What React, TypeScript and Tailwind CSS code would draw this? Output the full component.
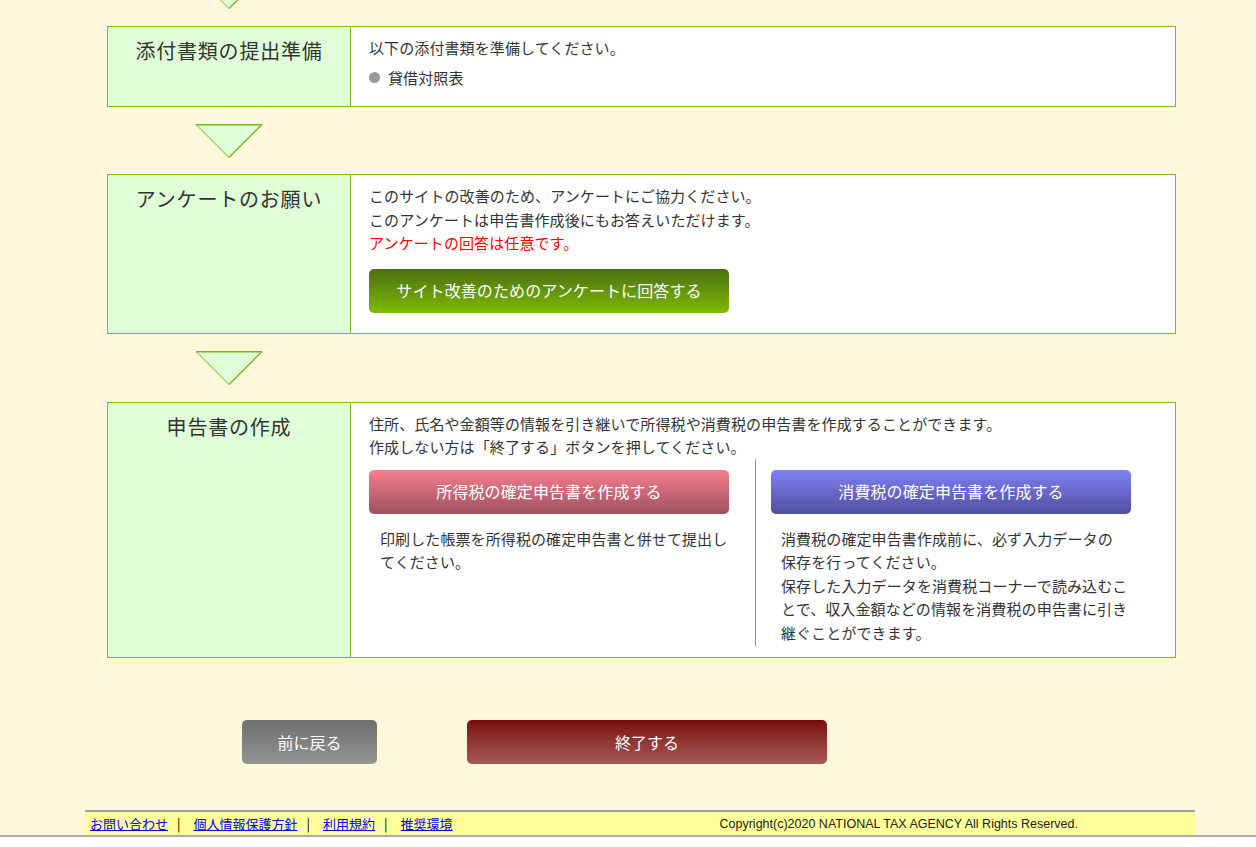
import React from "react";

const font = { fontFamily: '"Noto Sans CJK JP", "Noto Sans", sans-serif' };

function Arrow({ top = false, mb = "mb-[17px]" }: { top?: boolean; mb?: string }) {
  return (
    <div className={top ? "w-[243px] flex justify-center -mt-[25px] mb-[17px]" : `w-[243px] flex justify-center mt-[17px] ${mb}`}>
      <svg width="68" height="34" viewBox="0 0 68 34">
        <polygon points="1,0.5 67,0.5 34,33.5" fill="#dfffd6" stroke="none" />
        <line x1="1" y1="0.5" x2="34" y2="33.5" stroke="#a6d46a" strokeWidth="1.2" />
        <line x1="67" y1="0.5" x2="34" y2="33.5" stroke="#7fb72a" strokeWidth="1.4" />
        <line x1="1" y1="0.75" x2="67" y2="0.75" stroke="#7ab51d" strokeWidth="1.5" />
      </svg>
    </div>
  );
}

function Box({ title, children, pb = "pb-[17px]" }: { title: string; children: React.ReactNode; pb?: string }) {
  return (
    <div className="flex w-[1069px] border border-[#80b818] bg-white">
      <div className="w-[243px] shrink-0 bg-[#e0ffd8] border-r border-[#80b818] pt-[12px] text-center text-[20px] leading-[24px] tracking-[0.8px] text-[#333]">
        {title}
      </div>
      <div className={`flex-1 pl-[18px] pt-[9px] ${pb} text-[15px] leading-[23.5px] tracking-[0.1px] text-[#333]`}>{children}</div>
    </div>
  );
}

export default function App() {
  return (
    <div style={font} className="w-[1256px] bg-[#fff7dc] border-b-2 border-[#aaaaaa]">
      <div className="ml-[107px]">
        <Arrow top />
        <Box title="添付書類の提出準備">
          <p>以下の添付書類を準備してください。</p>
          <div className="mt-[6px] flex items-center">
            <span className="w-[11px] h-[11px] rounded-full bg-[#999] mr-[8px]" />
            <span>貸借対照表</span>
          </div>
        </Box>
        <Arrow mb="mb-[16px]" />
        <Box title="アンケートのお願い" pb="pb-[20px]">
          <p>このサイトの改善のため、アンケートにご協力ください。</p>
          <p>このアンケートは申告書作成後にもお答えいただけます。</p>
          <p className="text-[#ff0000]">アンケートの回答は任意です。</p>
          <button className="mt-[14px] w-[360px] h-[44px] rounded-[5px] bg-gradient-to-b from-[#4b6f0f] to-[#80bb00] text-white text-[16px]">
            サイト改善のためのアンケートに回答する
          </button>
        </Box>
        <Arrow mb="mb-[17px]" />
        <Box title="申告書の作成" pb="pb-[11px]">
          <p>住所、氏名や金額等の情報を引き継いで所得税や消費税の申告書を作成することができます。</p>
          <p>作成しない方は「終了する」ボタンを押してください。</p>
          <div className="flex">
            <div className="w-[387px] pt-[11px] border-r border-[#80b818]">
              <button className="w-[360px] h-[44px] rounded-[5px] bg-gradient-to-b from-[#f6808f] to-[#a0505f] text-white text-[16px]">
                所得税の確定申告書を作成する
              </button>
              <p className="mt-[13px] ml-[11px] whitespace-nowrap">
                印刷した帳票を所得税の確定申告書と併せて提出し
                <br />
                てください。
              </p>
            </div>
            <div className="pl-[15px] pt-[11px] pb-[2px]">
              <button className="w-[360px] h-[44px] rounded-[5px] bg-gradient-to-b from-[#8080f6] to-[#50509f] text-white text-[16px]">
                消費税の確定申告書を作成する
              </button>
              <p className="mt-[13px] ml-[10px] whitespace-nowrap">
                消費税の確定申告書作成前に、必ず入力データの
                <br />
                保存を行ってください。
                <br />
                保存した入力データを消費税コーナーで読み込むこ
                <br />
                とで、収入金額などの情報を消費税の申告書に引き
                <br />
                継ぐことができます。
              </p>
            </div>
          </div>
        </Box>
      </div>
      <div className="flex gap-[90px] ml-[242px] mt-[62px]">
        <button className="w-[135px] h-[44px] rounded-[5px] bg-gradient-to-b from-[#6e6e6e] to-[#949494] text-white text-[16px]">
          前に戻る
        </button>
        <button className="w-[360px] h-[44px] rounded-[5px] bg-gradient-to-b from-[#780a0a] to-[#a65858] text-white text-[16px]">
          終了する
        </button>
      </div>
      <div className="ml-[85px] mt-[46px] w-[1110px] h-[25px] bg-[#ffff99] border-t-2 border-[#a0a0a0] flex items-center text-[13px]">
        <div className="pl-[5px] pt-[1px] flex items-center">
          <a href="#" className="text-[#0000ee] underline">お問い合わせ</a>
          <span className="ml-[9px] mr-[13px] text-black">|</span>
          <a href="#" className="text-[#0000ee] underline">個人情報保護方針</a>
          <span className="ml-[9px] mr-[13px] text-black">|</span>
          <a href="#" className="text-[#0000ee] underline">利用規約</a>
          <span className="ml-[9px] mr-[13px] text-black">|</span>
          <a href="#" className="text-[#0000ee] underline">推奨環境</a>
        </div>
        <div className="ml-auto pr-[117px] pt-[1px] text-[12.5px] text-[#222]" style={{ fontFamily: '"Liberation Sans", sans-serif' }}>
          Copyright(c)2020 NATIONAL TAX AGENCY All Rights Reserved.
        </div>
      </div>
    </div>
  );
}
